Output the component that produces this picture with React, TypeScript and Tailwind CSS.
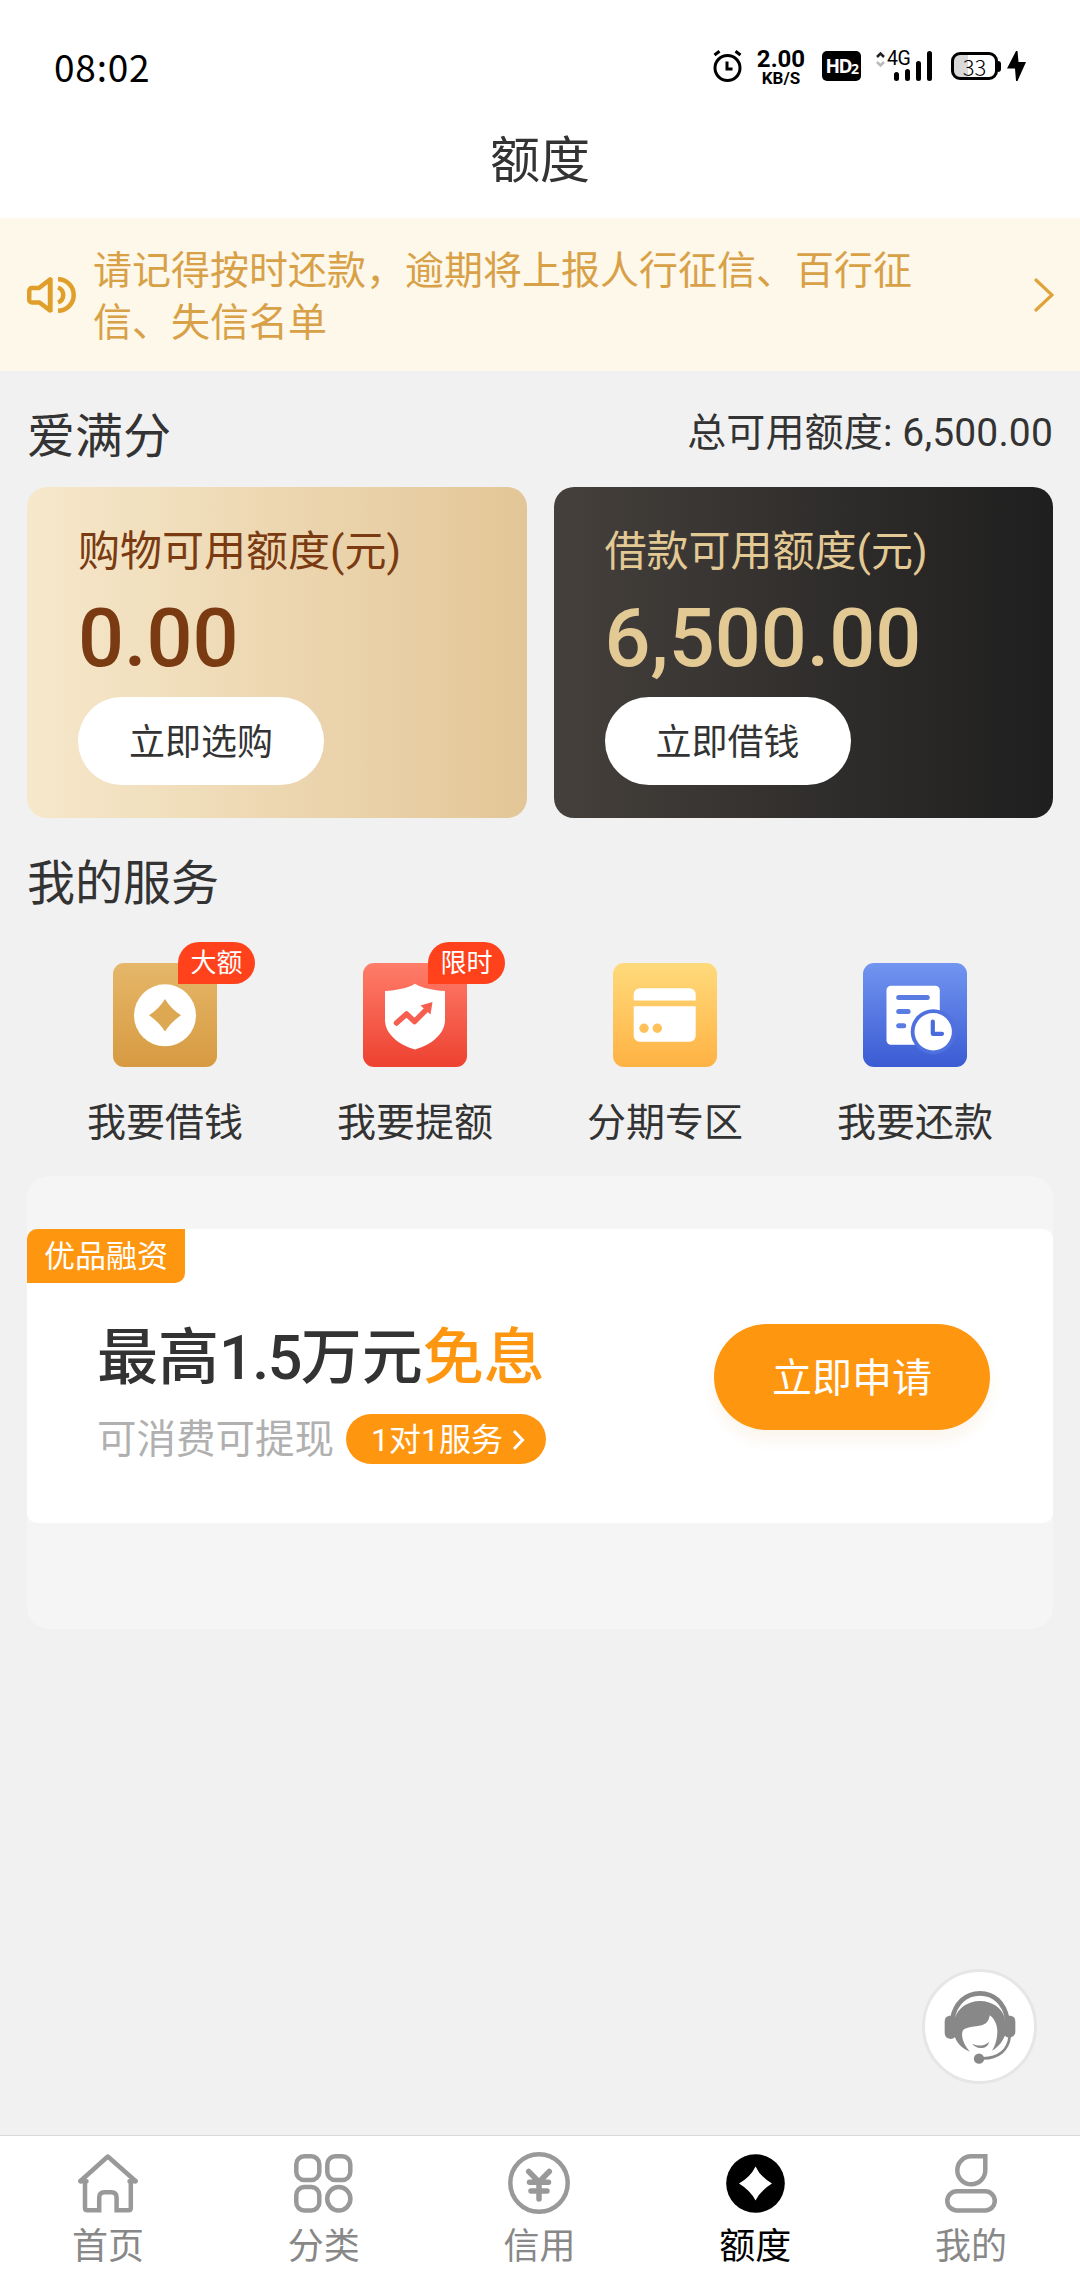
import React from 'react';

interface QuotaCardProps {
  title: string;
  amount: string;
  action: string;
  className: string;
}

interface ServiceItemProps {
  label: string;
  badge?: string;
  children: React.ReactNode;
}

interface TabItemProps {
  label: string;
  active?: boolean;
  children: React.ReactNode;
}

const StatusBar: React.FC = () => {
  return (
    <div className="flex h-[110px] items-start justify-between pl-[54px] pr-[54px] text-black">
      <span className="mt-[39px] font-['Noto_Sans_CJK_SC',sans-serif] text-[37px] leading-[54px] tracking-[0.8px]">08:02</span>
      <div className="mt-[46px] flex h-10 items-center">
        <svg width="30" height="32" viewBox="0 0 30 32" fill="none" stroke="#000" strokeWidth="3">
          <circle cx="14.5" cy="18" r="12.5" />
          <path d="M14 11.5V19h5.5M1.5 5l5-3.8M27.5 5l-5-3.8" />
        </svg>
        <div className="ml-[13px] flex w-[50px] flex-col items-center pt-[3px] font-[Roboto,sans-serif]">
          <span className="text-[24px] font-bold leading-[20px]">2.00</span>
          <span className="text-[17px] font-bold leading-[18px]">KB/S</span>
        </div>
        <div className="ml-[16px] flex h-[30px] w-[39px] items-center justify-center rounded-[5px] bg-black font-['Open_Sans',sans-serif] text-[19px] font-bold leading-[30px] tracking-[-1.5px] text-white">
          HD<span className="mt-[6px] text-[14px]">2</span>
        </div>
        <div className="relative ml-[15px] h-[30px] w-[57px]">
          <svg width="57" height="30" viewBox="0 0 57 30" fill="none">
            <path d="M1 6l3.5-3.5L8 6" stroke="#222" strokeWidth="2.5" />
            <path d="M1 11l3.5 3.5L8 11" stroke="#bbb" strokeWidth="2.5" />
            <path d="M20.5 23.5v4M31.5 20.5v7M42.5 12.5v15M53.5 2.5v25" stroke="#000" strokeWidth="5" strokeLinecap="round" />
          </svg>
          <span className="absolute left-[11px] top-[-1px] font-[Roboto,sans-serif] text-[19.5px] leading-[18px] tracking-[-0.5px]">4G</span>
        </div>
        <div className="ml-[18px] flex items-center">
          <div className="flex h-[28px] w-[47px] items-center justify-center rounded-[9px] border-[3px] border-black bg-linear-to-r from-[#d9d9d9] from-33% to-white to-33% pb-px font-['Noto_Sans_CJK_SC',sans-serif] text-[22px] font-light leading-[22px]">
            33
          </div>
          <div className="h-[11px] w-[3px] rounded-r-[3px] bg-black" />
        </div>
        <svg className="ml-[6px]" width="19" height="30" viewBox="0 0 19 30">
          <path d="M9 0L0 17.5h8L9 30h1.500L19 11h-7.500L10.500 0z" fill="#000" />
        </svg>
      </div>
    </div>
  );
};

const NoticeBar: React.FC = () => {
  return (
    <div className="flex h-[153px] items-center bg-[#fef8eb] pl-[27px] pr-[26px]">
      <svg width="49" height="36" viewBox="0 0 49 36" fill="none" stroke="#e09e2b" strokeWidth="4.5">
        <path d="M2.3 13.5a2.5 2.5 0 0 1 2.5-2.5H12L23 2.5v31L12.5 25.5H5a2.8 2.8 0 0 1-2.8-2.8z" strokeLinejoin="round" />
        <path d="M23.3 1v34" />
        <path d="M31 2.3a15.7 15.7 0 0 1 0 31.4M31 10.5a8 8 0 0 1 0 15" />
      </svg>
      <p className="ml-[17px] mt-[5px] w-[830px] text-[39px] leading-[52px] text-[#d8a147]">
        请记得按时还款，逾期将上报人行征信、百行征信、失信名单
      </p>
      <svg className="ml-auto" width="20" height="34" viewBox="0 0 20 34" fill="none">
        <path d="M2 2l16 15L2 32" stroke="#e0a23a" strokeWidth="3.2" strokeLinecap="round" />
      </svg>
    </div>
  );
};

const QuotaCard: React.FC<QuotaCardProps> = ({ title, amount, action, className }) => {
  return (
    <div className={`flex h-[331px] flex-1 flex-col items-start rounded-[20px] pl-[51px] pt-[35px] ${className}`}>
      <span className="text-[42px] leading-[60px]">{title}</span>
      <span className="mt-[7px] text-[81px] font-medium leading-[100px]">{amount}</span>
      <button className="mt-[8px] flex h-[88px] w-[246px] items-center justify-center rounded-full bg-white pt-[3px] text-[36px] leading-[50px] text-[#333]">
        {action}
      </button>
    </div>
  );
};

const ServiceItem: React.FC<ServiceItemProps> = ({ label, badge, children }) => {
  return (
    <div className="flex w-[250px] flex-col items-center">
      <div className="relative h-[104px] w-[104px]">
        {children}
        {badge && (
          <span className="absolute left-[65px] top-[-21px] flex h-[42px] w-[77px] items-center justify-center rounded-full rounded-bl-none bg-[#ff421c] text-[26px] leading-[42px] text-white">
            {badge}
          </span>
        )}
      </div>
      <span className="mt-[28px] text-[39px] leading-[56px] text-[#333]">{label}</span>
    </div>
  );
};

const TileGradient: React.FC<{ id: string; from: string; to: string }> = ({ id, from, to }) => {
  return (
    <>
      <defs>
        <linearGradient id={id} x1="0" y1="0" x2="0" y2="104" gradientUnits="userSpaceOnUse">
          <stop offset="0" stopColor={from} />
          <stop offset="1" stopColor={to} />
        </linearGradient>
      </defs>
      <rect width="104" height="104" rx="11" fill={`url(#${id})`} />
    </>
  );
};

const LoanIcon: React.FC = () => (
  <svg width="104" height="104" viewBox="0 0 104 104">
    <TileGradient id="loan" from="#e5b769" to="#d79a41" />
    <circle cx="52" cy="52.3" r="31" fill="#fff" />
    <path d="M52 36Q58 46 68 52.3Q58 59 52 68.5Q46 59 36 52.3Q46 46 52 36z" fill="#dca852" />
  </svg>
);

const RaiseIcon: React.FC = () => (
  <svg width="104" height="104" viewBox="0 0 104 104">
    <TileGradient id="raise" from="#ff7d69" to="#ed4131" />
    <path d="M52 20.7C60 25.5 70 27 82 28V57C82 71 68 82 52 86.5C36 82 22 71 22 57V28C34 27 44 25.5 52 20.7z" fill="#fff" />
    <path d="M33.5 60L43.5 51L51.5 58.5L65 45" fill="none" stroke="#f65f4f" strokeWidth="5.5" strokeLinecap="round" strokeLinejoin="round" />
    <path d="M69.5 39L57.5 42.5L67.5 51.5z" fill="#f65f4f" />
  </svg>
);

const InstallmentIcon: React.FC = () => (
  <svg width="104" height="104" viewBox="0 0 104 104">
    <TileGradient id="installment" from="#ffda7b" to="#ffb243" />
    <path d="M26.7 25.3h50a6 6 0 0 1 6 6v6.2h-62v-6.2a6 6 0 0 1 6-6zM20.7 43.3h62v29.4a6 6 0 0 1-6 6h-50a6 6 0 0 1-6-6z" fill="#fff" />
    <circle cx="31" cy="65.3" r="4.7" fill="#ffc159" />
    <circle cx="44.3" cy="65.3" r="4.7" fill="#ffc159" />
  </svg>
);

const RepayIcon: React.FC = () => (
  <svg width="104" height="104" viewBox="0 0 104 104">
    <TileGradient id="repay" from="#7195f0" to="#3b5bd3" />
    <rect x="23.5" y="22.7" width="53.3" height="59" rx="4.5" fill="#fff" />
    <path d="M35.7 34.5h28.6M35.7 48.5h9.4M35.7 62.8h5" stroke="#5a7be2" strokeWidth="5" strokeLinecap="round" />
    <circle cx="70.2" cy="68.7" r="22.5" fill="#4f70df" />
    <circle cx="70.2" cy="68.7" r="18.7" fill="#fff" />
    <path d="M69.8 58.5v12.3h9.2" fill="none" stroke="#4a6bdc" strokeWidth="4.2" strokeLinecap="round" strokeLinejoin="round" />
  </svg>
);

const PromoBanner: React.FC = () => {
  return (
    <div className="mx-[27px] mt-[25px] h-[453px] rounded-[22px] bg-[#f5f5f5] pt-[53px]">
      <div className="h-[294px] overflow-hidden rounded-[10px] bg-white">
        <div className="flex h-[54px] w-[158px] items-center justify-center rounded-br-[10px] bg-[#ff960f] pt-px text-[31px] leading-[54px] text-white">
          优品融资
        </div>
        <div className="flex items-start justify-between pl-[70px] pr-[63px]">
          <div>
            <h3 className="mt-[31px] whitespace-nowrap text-[61px] font-medium leading-[88px] text-[#333]">
              最高<span className="tracking-[-1.5px]">1.5</span>万元<span className="text-[#ff960f]">免息</span>
            </h3>
            <div className="mt-[11px] flex items-center">
              <span className="w-[249px] whitespace-nowrap pt-[2px] text-[39.5px] leading-[50px] text-[#b0b0b0]">可消费可提现</span>
              <span className="flex h-[50px] w-[200px] items-center rounded-full bg-[#ff960f] pl-[25px] pt-px text-[32px] leading-[50px] text-white">
                1对1服务
                <svg className="ml-[9px]" width="13" height="22" viewBox="0 0 13 22" fill="none">
                  <path d="M2 2l8.5 9L2 20" stroke="#fff" strokeWidth="3" />
                </svg>
              </span>
            </div>
          </div>
          <button className="mt-[41px] flex h-[106px] w-[276px] items-center justify-center rounded-full bg-[#ff960f] pt-[3px] text-[40px] leading-[56px] text-white shadow-[0_10px_14px_rgba(200,130,30,0.08)]">
            立即申请
          </button>
        </div>
      </div>
    </div>
  );
};

const SupportButton: React.FC = () => {
  return (
    <button className="absolute left-[922px] top-[1969px] h-[115px] w-[115px] rounded-full border-[3px] border-[#e6e6e6] bg-white">
      <svg width="109" height="109" viewBox="76 66 327 327" fill="#888">
        <path d="M158 207C166 160 198 130 241 130S314 160 323 207" fill="none" stroke="#888" strokeWidth="14" />
        <path d="M166 203C176 173 206 153 241 153S306 173 315 203L318 250C312 272 296 292 277 302C290 282 293 260 293 242C292 222 284 206 270 196C268 212 262 221 246 226C226 231 200 230 190 241C182 256 192 286 211 305C190 298 173 282 166 262z" />
        <path d="M149 197h12q7 0 7 7v56q-8 7-15 7q-18-2-18-18v-34q0-16 14-18zM333 197h-12q-7 0-7 7v52q6 7 13 7q20-2 20-18v-30q0-16-14-18z" />
        <path d="M218 281Q245 295 269 275Q263 295 243 294Q226 293 218 281z" />
        <circle cx="238" cy="326" r="15.5" />
        <path d="M330 260C326 300 296 326 248 325" fill="none" stroke="#888" strokeWidth="8" />
      </svg>
    </button>
  );
};

const TabItem: React.FC<TabItemProps> = ({ label, active, children }) => {
  return (
    <div className={`flex flex-1 flex-col items-center ${active ? 'text-black' : 'text-[#888]'}`}>
      <div className="flex h-[62px] items-center">{children}</div>
      <span className="mt-[8px] text-[36px] leading-[50px]">{label}</span>
    </div>
  );
};

const TabBar: React.FC = () => {
  return (
    <div className="mt-auto flex h-[145px] border-t border-[#d9d9d9] bg-white pr-px pt-[16px]">
      <TabItem label="首页">
        <svg width="60" height="59" viewBox="0 0 60 59" fill="none" stroke="#999" strokeWidth="4.5">
          <path d="M2.5 27L29.8 2.5L57.5 27" strokeLinecap="round" strokeLinejoin="round" />
          <path d="M2.5 27.3h6M57.5 27.3h-6" strokeLinecap="round" />
          <path d="M7 27v27q0 2.3 2.5 2.3h11.7V43.5q0-5.3 5.3-5.3h6.8q5.3 0 5.3 5.3v12.8h11.7q2.5 0 2.5-2.3V27" />
        </svg>
      </TabItem>
      <TabItem label="分类">
        <svg width="59" height="59" viewBox="0 0 59 59" fill="none" stroke="#999" strokeWidth="4.5">
          <rect x="2.3" y="2.3" width="23" height="23.8" rx="8" />
          <rect x="33.3" y="2.3" width="23" height="23.8" rx="8" />
          <rect x="2.3" y="33" width="23" height="23.5" rx="8" />
          <ellipse cx="44.8" cy="44.8" rx="11.6" ry="11.7" />
        </svg>
      </TabItem>
      <TabItem label="信用">
        <svg width="62" height="62" viewBox="0 0 62 62" fill="none" stroke="#999">
          <circle cx="31" cy="31" r="28.7" strokeWidth="4.5" />
          <path d="M20.7 19.5L31 30L41.3 19.5M21.5 30.3h19M23 39h16M31 30v17" strokeWidth="5.5" strokeLinecap="round" />
        </svg>
      </TabItem>
      <TabItem label="额度" active>
        <svg width="59" height="59" viewBox="0 0 59 59">
          <circle cx="29.5" cy="29.5" r="29.3" fill="#000" />
          <path d="M29.5 12.5Q34.5 23 46 29.5Q34.5 36.5 29.5 46.5Q24.5 36.5 13 29.5Q24.5 23 29.5 12.5z" fill="#fff" />
        </svg>
      </TabItem>
      <TabItem label="我的">
        <svg width="52" height="59" viewBox="0 0 52 59" fill="none" stroke="#999" strokeWidth="4.5">
          <path d="M40.3 2.3H26A14 14 0 1 0 40.3 16.3z" />
          <rect x="2.3" y="37.3" width="47.5" height="19.2" rx="9.6" />
        </svg>
      </TabItem>
    </div>
  );
};

export default function App() {
  return (
    <div
      lang="zh-CN"
      className="relative flex h-[2280px] w-[1080px] flex-col overflow-hidden bg-[#f1f1f1] font-[Roboto,'Noto_Sans_CJK_SC',sans-serif]"
    >
      <div className="h-[218px] bg-white">
        <StatusBar />
        <h1 className="mt-[15px] text-center text-[50px] leading-[72px] text-[#333]">额度</h1>
      </div>
      <NoticeBar />

      <div className="flex h-[116px] items-center justify-between px-[27px] text-[#333]">
        <h2 className="mt-[16px] text-[48px] leading-[70px]">爱满分</h2>
        <span className="mt-[8px] text-[39px] leading-[56px] tracking-[0.15px]">总可用额度: 6,500.00</span>
      </div>
      <div className="flex gap-[27px] px-[27px]">
        <QuotaCard
          title="购物可用额度(元)"
          amount="0.00"
          action="立即选购"
          className="bg-linear-to-r from-[#f6e8cb] to-[#e3c697] text-[#7a3a12]"
        />
        <QuotaCard
          title="借款可用额度(元)"
          amount="6,500.00"
          action="立即借钱"
          className="bg-linear-to-r from-[#45403c] to-[#1f1f1f] text-[#e3c994]"
        />
      </div>

      <h2 className="ml-[27px] mt-[31px] text-[48px] leading-[70px] text-[#333]">我的服务</h2>
      <div className="mt-[44px] flex px-[40px]">
        <ServiceItem label="我要借钱" badge="大额">
          <LoanIcon />
        </ServiceItem>
        <ServiceItem label="我要提额" badge="限时">
          <RaiseIcon />
        </ServiceItem>
        <ServiceItem label="分期专区">
          <InstallmentIcon />
        </ServiceItem>
        <ServiceItem label="我要还款">
          <RepayIcon />
        </ServiceItem>
      </div>

      <PromoBanner />
      <SupportButton />
      <TabBar />
    </div>
  );
}
